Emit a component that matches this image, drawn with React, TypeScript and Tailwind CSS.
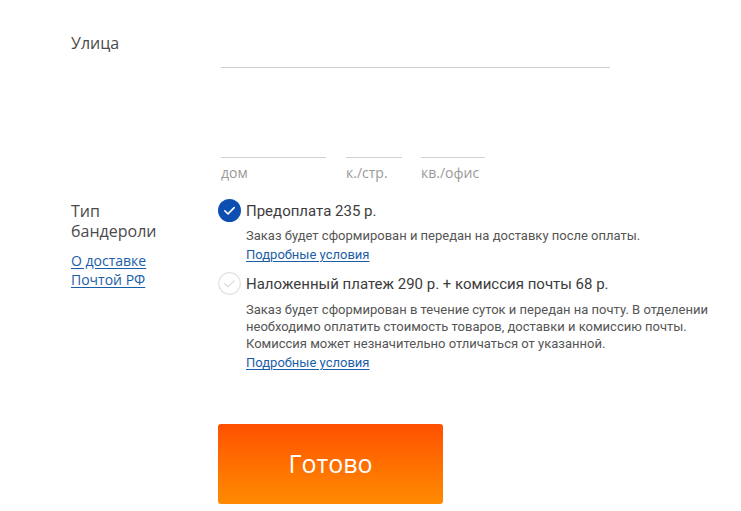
import React from "react";

const font = { fontFamily: '"Open Sans", "Noto Sans", sans-serif' };
const body = { fontFamily: 'Roboto, "Open Sans", sans-serif' };

function CheckCircle({ checked }: { checked: boolean }) {
  return checked ? (
    <svg width="23" height="23" viewBox="0 0 23 23" className="shrink-0">
      <circle cx="11.5" cy="11.5" r="11.5" fill="#0d4fb0" />
      <path d="M6.8 11.8l3.2 3.1 6.2-6.3" fill="none" stroke="#fff" strokeWidth="1.6" strokeLinecap="round" strokeLinejoin="round" />
    </svg>
  ) : (
    <svg width="23" height="23" viewBox="0 0 23 23" className="shrink-0">
      <circle cx="11.5" cy="11.5" r="10.8" fill="#fff" stroke="#e2e2e2" strokeWidth="1.2" />
      <path d="M6.8 11.8l3.2 3.1 6.2-6.3" fill="none" stroke="#dcdcdc" strokeWidth="1.3" strokeLinecap="round" strokeLinejoin="round" />
    </svg>
  );
}

export default function App() {
  return (
    <div className="w-[741px] h-[511px] bg-white overflow-hidden text-[#4a4a4a]" style={font}>
      <div className="flex pl-[71px] pt-[32px]">
        <div className="w-[150px] text-[16px] leading-[22px]">Улица</div>
        <div className="w-[389px] h-[36px] border-b border-[#cfcfcf]" />
      </div>
      <div className="flex pl-[221px] pt-[89px] gap-[20px]">
        <div className="w-[105px]">
          <div className="border-t border-[#cfcfcf]" />
          <div className="text-[14px] leading-[20px] mt-[5px] text-[#9a9a9a]">дом</div>
        </div>
        <div className="w-[56px]">
          <div className="border-t border-[#cfcfcf]" />
          <div className="text-[14px] leading-[20px] mt-[5px] text-[#9a9a9a]">к./стр.</div>
        </div>
        <div className="w-[64px] -ml-[1px]">
          <div className="border-t border-[#cfcfcf]" />
          <div className="text-[14px] leading-[20px] mt-[5px] text-[#9a9a9a]">кв./офис</div>
        </div>
      </div>
      <div className="flex pl-[71px] pt-[16px]">
        <div className="w-[147px] pt-[2px]">
          <div className="text-[16px] leading-[20px]">Тип<br />бандероли</div>
          <div className="mt-[10px] text-[14px] leading-[19px]">
            <a href="#" className="text-[#1a5ea8] underline underline-offset-2">О доставке</a>
            <br />
            <a href="#" className="text-[#1a5ea8] underline underline-offset-2">Почтой РФ</a>
          </div>
        </div>
        <div className="flex flex-col" style={body}>
          <div className="flex items-center gap-[5px]">
            <CheckCircle checked />
            <span className="text-[15px] leading-[20px] text-[#3c3c3c]">Предоплата 235 р.</span>
          </div>
          <div className="pl-[28px] mt-[5px] text-[13px] leading-[17px] text-[#555]">
            Заказ будет сформирован и передан на доставку после оплаты.
          </div>
          <div className="pl-[28px] mt-[2px] text-[13px] leading-[17px]">
            <a href="#" className="text-[#1a5ea8] underline underline-offset-2">Подробные условия</a>
          </div>
          <div className="flex items-center gap-[5px] mt-[9px]">
            <CheckCircle checked={false} />
            <span className="text-[15px] leading-[20px] text-[#3c3c3c]">Наложенный платеж 290 р. + комиссия почты 68 р.</span>
          </div>
          <div className="pl-[28px] mt-[6px] text-[13px] leading-[17px] text-[#555] w-[520px]">
            Заказ будет сформирован в течение суток и передан на почту. В отделении<br />
            необходимо оплатить стоимость товаров, доставки и комиссию почты.<br />
            Комиссия может незначительно отличаться от указанной.
          </div>
          <div className="pl-[28px] mt-[2px] text-[13px] leading-[17px]">
            <a href="#" className="text-[#1a5ea8] underline underline-offset-2">Подробные условия</a>
          </div>
          <button className="mt-[53px] w-[225px] h-[80px] rounded-[3px] bg-gradient-to-b from-[#ff4f00] to-[#ff8a00] text-white text-[25px] font-medium flex items-center justify-center" style={font}>
            Готово
          </button>
        </div>
      </div>
    </div>
  );
}
